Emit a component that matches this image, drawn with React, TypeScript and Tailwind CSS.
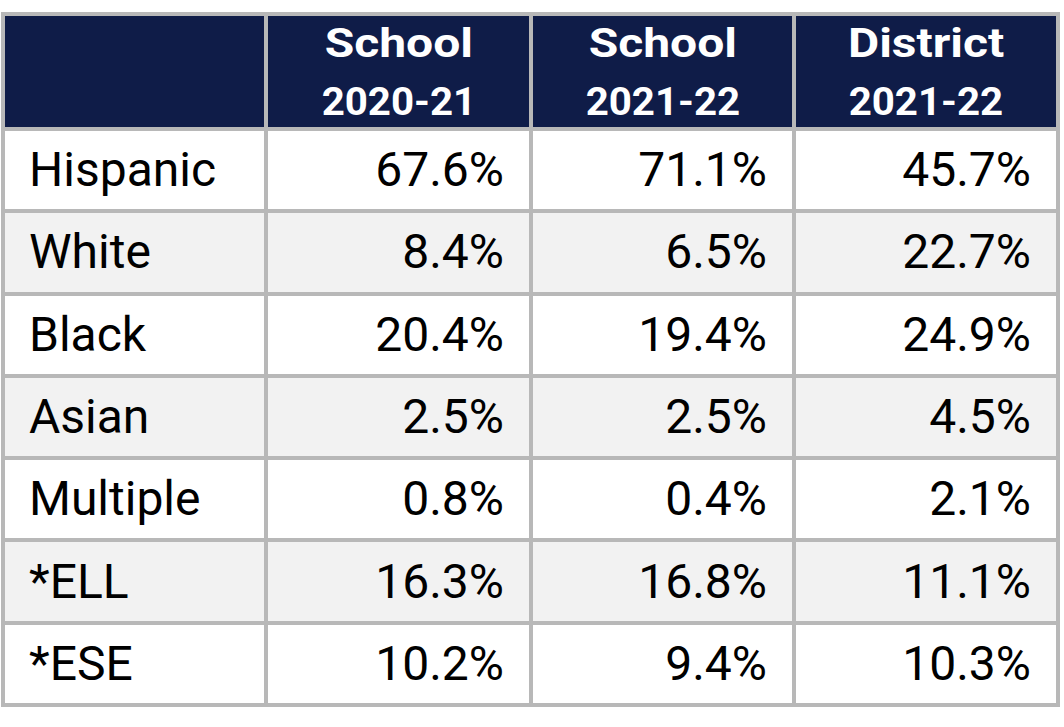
import React from "react";

const rows: [string, string, string, string][] = [
  ["Hispanic", "67.6%", "71.1%", "45.7%"],
  ["White", "8.4%", "6.5%", "22.7%"],
  ["Black", "20.4%", "19.4%", "24.9%"],
  ["Asian", "2.5%", "2.5%", "4.5%"],
  ["Multiple", "0.8%", "0.4%", "2.1%"],
  ["*ELL", "16.3%", "16.8%", "11.1%"],
  ["*ESE", "10.2%", "9.4%", "10.3%"],
];

const headers: [string, string][] = [
  ["School", "2020-21"],
  ["School", "2021-22"],
  ["District", "2021-22"],
];

export default function App() {
  return (
    <div
      className="w-[1064px] h-[727px] bg-white"
      style={{ fontFamily: "Roboto, 'Liberation Sans', sans-serif" }}
    >
      <div className="ml-[1px] pt-[12px]">
        <div className="grid w-[1059px] grid-cols-[259px_261px_259px_260px] grid-rows-[111px_repeat(7,78.29px)] gap-[4px] bg-[#b8b8b8] p-[4px]">
          <div className="bg-[#0f1c48]" />
          {headers.map(([a, b], i) => (
            <div
              key={i}
              className="flex flex-col items-center bg-[#0f1c48] pt-[8px] font-bold text-white"
            >
              <div className="origin-center scale-x-[1.2] whitespace-nowrap text-[40px] leading-[40px]">
                {a}
              </div>
              <div className="mt-[19px] origin-center scale-x-[1.06] whitespace-nowrap text-[38px] leading-[38px]">
                {b}
              </div>
            </div>
          ))}
          {rows.map((r, ri) => {
            const bg = ri % 2 === 1 ? "bg-[#f2f2f2]" : "bg-white";
            return (
              <React.Fragment key={ri}>
                <div
                  className={`${bg} flex items-center pl-[24px] text-[48px] leading-[48px] text-black`}
                >
                  {r[0]}
                </div>
                {r.slice(1).map((v, ci) => (
                  <div
                    key={ci}
                    className={`${bg} flex items-center justify-end pr-[25px] text-[48px] leading-[48px] text-black`}
                  >
                    {v}
                  </div>
                ))}
              </React.Fragment>
            );
          })}
        </div>
      </div>
    </div>
  );
}
